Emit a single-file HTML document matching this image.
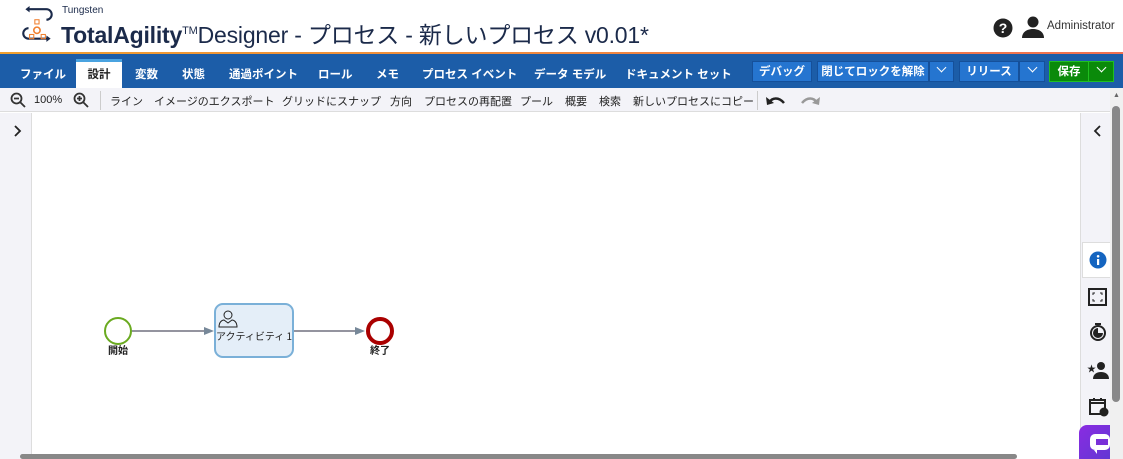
<!DOCTYPE html>
<html><head><meta charset="utf-8"><style>
*{box-sizing:border-box;margin:0;padding:0}
body{width:1123px;height:459px;overflow:hidden;background:#fff;font-family:"Liberation Sans","Noto Sans CJK JP",sans-serif;position:relative}
.abs{position:absolute}
.hdr{left:0;top:0;width:1123px;height:52px;background:#fff}
.oline{left:0;top:52px;width:1123px;height:2px;background:linear-gradient(90deg,#f0a030,#f07050)}
.bar{left:0;top:54px;width:1123px;height:34px;background:#1c5da8}
.tab{top:66px;color:#fff;font-size:11.5px;font-weight:bold;white-space:nowrap}
.active{left:76px;top:59px;width:46px;height:29px;background:#fff;border-top:3px solid #4aa3e0;color:#222;font-size:11.5px;font-weight:bold;text-align:center;line-height:26px}
.btn{top:61px;height:21px;background:#2575d0;border:1px solid #15509a;color:#fff;font-size:11.5px;font-weight:bold;line-height:21px;text-align:center;white-space:nowrap}
.tb{left:0;top:88px;width:1110px;height:24px;background:#f3f3f8;border-bottom:1px solid #ddd}
.tt{top:93px;font-size:11px;color:#222;white-space:nowrap}
.chev{display:inline-block;width:7px;height:7px;border-right:1.5px solid #fff;border-bottom:1.5px solid #fff;transform:rotate(45deg);margin-bottom:4px}
</style></head><body>
<div class="abs hdr"></div>
<svg class="abs" style="left:18px;top:5px" width="40" height="40" viewBox="0 0 30 38">
<path d="M5 4h18a5 5 0 0 1 0 10" fill="none" stroke="#1b2a4a" stroke-width="2"/>
<path d="M7 1l-4 3 4 3z" fill="#1b2a4a"/>
<path d="M6 22a5 5 0 0 0 0 10h18" fill="none" stroke="#1b2a4a" stroke-width="2"/>
<path d="M23 29l4 3-4 3z" fill="#1b2a4a"/>
<circle cx="14" cy="24" r="3" fill="none" stroke="#f08030" stroke-width="1.5"/>
<rect x="12" y="14" width="4" height="4" fill="none" stroke="#f08030"/>
<rect x="7" y="28" width="4" height="4" fill="none" stroke="#f08030"/>
<rect x="18" y="28" width="4" height="4" fill="none" stroke="#f08030"/>
</svg>
<div class="abs" style="left:62px;top:5px;font-size:10px;color:#1b2a4a">Tungsten</div>
<div class="abs" style="left:61px;top:16px;font-size:23px;color:#1b2a4a;white-space:nowrap;letter-spacing:-0.2px"><b>TotalAgility</b><span style="font-size:11px;vertical-align:9px">TM</span>Designer - プロセス - 新しいプロセス v0.01*</div>
<svg class="abs" style="left:993px;top:18px" width="20" height="20"><circle cx="10" cy="10" r="9.5" fill="#222"/><text x="10" y="15" font-size="14" font-weight="bold" fill="#fff" text-anchor="middle" font-family="Liberation Sans">?</text></svg>
<svg class="abs" style="left:1021px;top:15px" width="24" height="24"><circle cx="12" cy="7" r="5.5" fill="#222"/><path d="M1 23c0-6 5-9 11-9s11 3 11 9z" fill="#222"/></svg>
<div class="abs" style="left:1047px;top:20px;font-size:11.5px;color:#333">Administrator</div>
<div class="abs oline"></div>
<div class="abs bar"></div>
<div class="abs tab" style="left:20px">ファイル</div>
<div class="abs active">設計</div>
<div class="abs tab" style="left:135px">変数</div>
<div class="abs tab" style="left:182px">状態</div>
<div class="abs tab" style="left:229px">通過ポイント</div>
<div class="abs tab" style="left:318px">ロール</div>
<div class="abs tab" style="left:376px">メモ</div>
<div class="abs tab" style="left:422px">プロセス イベント</div>
<div class="abs tab" style="left:534px">データ モデル</div>
<div class="abs tab" style="left:625px">ドキュメント セット</div>
<div class="abs btn" style="left:752px;width:60px">デバッグ</div>
<div class="abs btn" style="left:817px;width:112px">閉じてロックを解除</div>
<div class="abs btn" style="left:929px;width:25px"><span class="chev"></span></div>
<div class="abs btn" style="left:959px;width:60px">リリース</div>
<div class="abs btn" style="left:1019px;width:26px"><span class="chev"></span></div>
<div class="abs btn" style="left:1049px;width:40px;background:#0a8a0a;border-color:#20c020">保存</div>
<div class="abs btn" style="left:1088px;width:26px;background:#0a8a0a;border-color:#20c020"><span class="chev"></span></div>
<div class="abs tb"></div>
<svg class="abs" style="left:10px;top:92px" width="16" height="16"><circle cx="6.5" cy="6.5" r="5" fill="none" stroke="#333" stroke-width="1.8"/><path d="M10 10l5 5M4 6.5h5" stroke="#333" stroke-width="1.8"/></svg>
<div class="abs tt" style="left:34px;top:94px">100%</div>
<svg class="abs" style="left:73px;top:92px" width="16" height="16"><circle cx="6.5" cy="6.5" r="5" fill="none" stroke="#333" stroke-width="1.8"/><path d="M10 10l5 5M4 6.5h5M6.5 4v5" stroke="#333" stroke-width="1.8"/></svg>
<div class="abs" style="left:100px;top:91px;width:1px;height:19px;background:#ccc"></div>
<div class="abs tt" style="left:110px">ライン</div>
<div class="abs tt" style="left:154px">イメージのエクスポート</div>
<div class="abs tt" style="left:282px">グリッドにスナップ</div>
<div class="abs tt" style="left:390px">方向</div>
<div class="abs tt" style="left:424px">プロセスの再配置</div>
<div class="abs tt" style="left:520px">プール</div>
<div class="abs tt" style="left:565px">概要</div>
<div class="abs tt" style="left:599px">検索</div>
<div class="abs tt" style="left:633px">新しいプロセスにコピー</div>
<div class="abs" style="left:757px;top:91px;width:1px;height:19px;background:#ccc"></div>
<svg class="abs" style="left:766px;top:94px" width="20" height="12"><path d="M3 9c3-6 10-6 15 0" fill="none" stroke="#222" stroke-width="2.5"/><path d="M0 3l1 8 7-2z" fill="#222"/></svg>
<svg class="abs" style="left:800px;top:94px" width="20" height="12"><path d="M17 9c-3-6-10-6-15 0" fill="none" stroke="#999" stroke-width="2.5"/><path d="M20 3l-1 8-7-2z" fill="#999"/></svg>
<div class="abs" style="left:0;top:113px;width:32px;height:346px;background:#f3f3f8;border-right:1px solid #ddd"></div>
<svg class="abs" style="left:14px;top:125px" width="8" height="12"><path d="M1 1l5 5-5 5" fill="none" stroke="#222" stroke-width="1.8"/></svg>
<div class="abs" style="left:1080px;top:113px;width:30px;height:346px;background:#f3f3f8;border-left:1px solid #ddd"></div>
<svg class="abs" style="left:1093px;top:125px" width="8" height="12"><path d="M7 1L2 6l5 5" fill="none" stroke="#222" stroke-width="1.8"/></svg>
<div class="abs" style="left:1082px;top:242px;width:28px;height:36px;background:#fff;border:1px solid #ddd;border-right:none"></div>
<svg class="abs" style="left:1089px;top:251px" width="18" height="18"><circle cx="9" cy="9" r="8.5" fill="#1565c0"/><rect x="8" y="8" width="2.2" height="6" fill="#fff"/><circle cx="9.1" cy="5.3" r="1.3" fill="#fff"/></svg>
<svg class="abs" style="left:1088px;top:288px" width="19" height="18"><rect x="1" y="1" width="17" height="16" fill="none" stroke="#222" stroke-width="2"/><path d="M5 7V5h2M12 5h2v2M14 11v2h-2M7 13H5v-2" fill="none" stroke="#222"/></svg>
<svg class="abs" style="left:1089px;top:322px" width="18" height="20"><circle cx="9" cy="11" r="7" fill="none" stroke="#222" stroke-width="2"/><path d="M9 11V6a5 5 0 1 0 5 5z" fill="#222"/><path d="M6 2h6" stroke="#222" stroke-width="2"/></svg>
<svg class="abs" style="left:1087px;top:361px" width="22" height="18"><circle cx="14" cy="5" r="4" fill="#222"/><path d="M6 18c0-5 4-7 8-7s8 2 8 7z" fill="#222"/><text x="0" y="11" font-size="9" fill="#222">★</text></svg>
<svg class="abs" style="left:1089px;top:397px" width="20" height="20"><rect x="1" y="3" width="15" height="14" fill="none" stroke="#222" stroke-width="2"/><path d="M1 6h15M5 1v3M12 1v3" stroke="#222" stroke-width="2"/><circle cx="15" cy="15" r="4.5" fill="#222"/></svg>
<div class="abs" style="left:1079px;top:425px;width:44px;height:34px;border-radius:8px 0 0 0;background:linear-gradient(135deg,#8a2be2,#5a3ad0)"></div>
<svg class="abs" style="left:1088px;top:432px" width="24" height="22"><rect x="2" y="2" width="20" height="16" rx="5" fill="#fff"/><rect x="8" y="7" width="12" height="6" fill="#7a30d8"/><path d="M6 18l3 4v-4z" fill="#fff"/></svg>
<div class="abs" style="left:1110px;top:88px;width:13px;height:371px;background:#f0f0f0"></div>
<div class="abs" style="left:1113px;top:92px;font-size:7px;color:#666">▲</div>
<div class="abs" style="left:1112px;top:106px;width:8px;height:296px;background:#888;border-radius:4px"></div>
<div class="abs" style="left:20px;top:454px;width:997px;height:5px;background:#888;border-radius:3px"></div>
<svg class="abs" style="left:90px;top:290px" width="330" height="80">
<circle cx="28" cy="41" r="13" fill="#fff" stroke="#6aaa20" stroke-width="2"/>
<text x="28" y="64" font-size="10" font-weight="bold" text-anchor="middle" fill="#222" font-family="Noto Sans CJK JP">開始</text>
<path d="M42 41h72" stroke="#556" stroke-width="1.2"/><path d="M114 37l10 4-10 4z" fill="#778899"/>
<rect x="125" y="14" width="78" height="53" rx="8" fill="#e4eef8" stroke="#7ab0d8" stroke-width="2"/>
<circle cx="138" cy="25" r="4" fill="none" stroke="#222"/><path d="M129 37c0-5 3-7 5-7l4 3 4-3c2 0 5 2 5 7z" fill="none" stroke="#222"/>
<text x="164" y="50" font-size="10" text-anchor="middle" fill="#222" font-family="Noto Sans CJK JP">アクティビティ 1</text>
<path d="M204 41h61" stroke="#556" stroke-width="1.2"/><path d="M265 37l10 4-10 4z" fill="#778899"/>
<circle cx="290" cy="41" r="12" fill="#fff" stroke="#a00" stroke-width="4"/>
<text x="290" y="64" font-size="10" font-weight="bold" text-anchor="middle" fill="#222" font-family="Noto Sans CJK JP">終了</text>
</svg>
</body></html>
